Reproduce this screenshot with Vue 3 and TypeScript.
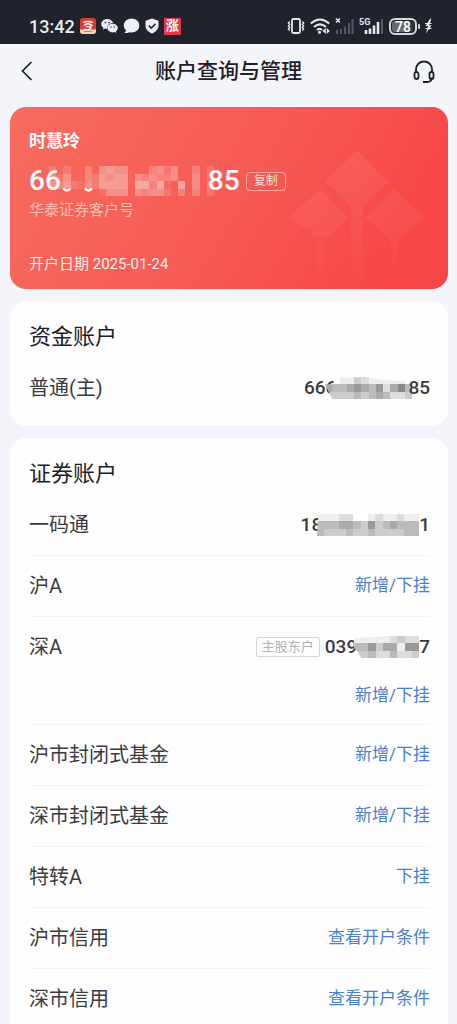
<script setup lang="ts">
interface Masked {
  head: string
  tail: string
  rows: string[]
  clip: string
  kind: string
}
interface Account {
  label: string
  value?: Masked
  tag?: string
  action?: string
}

// Each character is one cell: a hex grey level, or "." for an empty cell
const fundNumber: Masked = {
  head: '666',
  tail: '85',
  kind: 'fund',
  rows: ['..eecdeeeeef', 'abba9ab9da8b', 'ccccbcbabddc'],
  clip: '0,1 1.2,1 2,.1 5.5,0 8,.4 12,.6 12,3 1,3',
}

const accounts: Account[] = [
  {
    label: '一码通',
    value: {
      head: '18',
      tail: '1',
      kind: 'code',
      rows: ['eeeddffedeedee', 'bbbaabc9cbabbb', 'bcccbccbccccbb'],
      clip: '.2,0 14,0 14,3 0,3',
    },
  },
  { label: '沪A', action: '新增/下挂' },
  {
    label: '深A',
    tag: '主股东户',
    action: '新增/下挂',
    value: {
      head: '039',
      tail: '7',
      kind: 'holder',
      rows: ['eeeeedcdd', 'bb9caae99', 'ccbddbddc'],
      clip: '0,.3 5,0 9,0 9,3 1,3 .4,2 0,1.6',
    },
  },
  { label: '沪市封闭式基金', action: '新增/下挂' },
  { label: '深市封闭式基金', action: '新增/下挂' },
  { label: '特转A', action: '下挂' },
  { label: '沪市信用', action: '查看开户条件' },
  { label: '深市信用', action: '查看开户条件' },
]

// Customer number mask: each digit is an opacity step
const customerMask: string[] = [
  '2.2..3.4544...3424..3.2',
  '314..325455.434334..4.2',
  '43521425555.66361.6.4.3',
  '.......1444.43442.3.3.2',
]

const maskWidth = (rows: string[]): number => Math.round((rows[0].length * 29) / 4)

function cells(rows: string[]): { x: number; y: number; v: string }[] {
  return rows.flatMap((row, y) => [...row].map((v, x) => ({ x, y, v })).filter((c) => c.v !== '.'))
}
</script>

<template>
  <div class="screen">
    <div class="status">
      <div class="status-group left">
        <span class="time">13:42</span>
        <svg width="16" height="16" viewBox="0 0 16 16">
          <rect width="16" height="16" rx="3" fill="#dc3a32" />
          <path d="M0 11.500h16V13a3 3 0 0 1-3 3H3a3 3 0 0 1-3-3z" fill="#f3d3b4" />
          <path d="M3 4.500q5-2 10 0M4 7.500q4-3.500 8 0l-3 1.500M6 9q3-1 5 1-3 3-7 1" fill="none" stroke="#fff" stroke-width="1.300" />
          <path d="M4 13.500h8" stroke="#d08060" />
        </svg>
        <svg width="17" height="16" viewBox="0 0 17 16">
          <path d="M6.300 1C2.900 1 .3 3.200.3 6c0 1.600.8 2.900 2.100 3.800L2 11.800l2.200-1.200q1 .3 2 .3C6 7.200 8.500 5 12.200 5 11.600 2.700 9.200 1 6.300 1z" fill="#e8ecef" />
          <path d="M11.600 5.800c-3 0-5.200 1.900-5.200 4.300s2.300 4.300 5.200 4.300q.9 0 1.700-.3l1.900 1-.4-1.700c1.200-.8 2-2 2-3.300 0-2.400-2.300-4.300-5.200-4.300z" fill="#e8ecef" />
          <g fill="#20232b"><circle cx="4.300" cy="4.600" r=".8" /><circle cx="8" cy="4.600" r=".8" /><circle cx="10" cy="8.900" r=".7" /><circle cx="13.200" cy="8.900" r=".7" /></g>
        </svg>
        <svg width="17" height="16" viewBox="0 0 17 16">
          <path d="M8.600.5C4.200.5.8 3.600.8 7.400c0 2.200 1 3.900 2.500 5.100l-1.900 2.600c2 .1 3.700-.3 5-.9q1 .2 2.200.2c4.400 0 7.700-3.100 7.700-7S13 .5 8.600.5z" fill="#eef1f4" />
        </svg>
        <svg width="14" height="16" viewBox="0 0 14 16">
          <path d="M7 .5l6.500 2.300v5.200c0 3.700-3.200 6-6.500 7.500C3.700 14 .5 11.700.5 8V2.800z" fill="#eef1f4" />
          <path d="M3.800 7.600l2.500 2.500 4.200-4.300" fill="none" stroke="#20232b" stroke-width="1.500" />
        </svg>
        <span class="rise">涨</span>
      </div>
      <div class="status-group right">
        <svg width="18" height="18" viewBox="0 0 18 18" fill="none" stroke="#e6e8ec">
          <rect x="5" y="2" width="8" height="14" rx="1.500" stroke-width="1.800" />
          <path d="M2.800 4.500L1.300 6l1.500 1.500-1.500 1.500 1.500 1.500-1.500 1.500 1.500 1.500M15.200 4.500l1.500 1.500-1.500 1.500 1.500 1.500-1.500 1.500 1.500 1.500-1.500 1.500" stroke-width="1.300" />
        </svg>
        <svg width="20" height="18" viewBox="0 0 20 18" fill="none" stroke="#e6e8ec" stroke-width="2.100">
          <path d="M.8 6.500q9.200-8 18.400 0M4 10q6-5.400 12 0M7 13q3-2.600 5 0" />
          <circle cx="9.500" cy="15.300" r="1.500" fill="#e6e8ec" stroke="none" />
          <path d="M12.500 14l3.300-3v6zM16.800 11l3 3-3 3z" fill="#e6e8ec" stroke="none" />
        </svg>
        <svg width="19" height="18" viewBox="0 0 19 18">
          <path d="M1 1.500l4 4m0-4l-4 4" stroke="#e6e8ec" stroke-width="1.500" />
          <path d="M2 13v4M6 12v5M10 9.500V17M14 6v11M17.500 2v15" stroke="#555962" stroke-width="2" />
        </svg>
        <svg width="25" height="18" viewBox="0 0 25 18">
          <text x="0" y="8" font-family="Roboto, sans-serif" font-size="9" font-weight="700" fill="#e6e8ec">5G</text>
          <path d="M7 13v4M11 11.500V17M15 8.500V17M19 5v12" stroke="#e6e8ec" stroke-width="2.600" />
          <path d="M23 2v15" stroke="#555962" stroke-width="2" />
        </svg>
        <div class="power">
          <span class="battery"><span class="level">78</span></span>
          <span class="nub"></span>
        </div>
        <svg width="7" height="18" viewBox="0 0 7 18">
          <path d="M5.500 1L.5 9h2.500L1 16.500 6.500 8.300H4.300L6 3z" fill="#e6e8ec" />
          <path d="M0 6.500h6.500M.5 11.500H6.500" stroke="#e6e8ec" stroke-width="1.200" />
        </svg>
      </div>
    </div>

    <header class="bar">
      <button class="icon-btn" aria-label="返回">
        <svg width="24" height="24" viewBox="0 0 24 24" fill="none" stroke="#1d2027" stroke-width="1.700">
          <path d="M14.500 3L5.500 12l9 9" />
        </svg>
      </button>
      <h1>账户查询与管理</h1>
      <button class="icon-btn" aria-label="客服">
        <svg width="24" height="24" viewBox="0 0 24 24" fill="none" stroke="#1d2027" stroke-width="1.800">
          <path d="M4 13V10.500C4 5.800 7.500 2.500 12 2.500s8 3.300 8 8V13M20 18.500c-.2 3-2 4.500-5 4.500h-4" />
          <rect x="2.500" y="13" width="4" height="7" rx="2" />
          <rect x="17.500" y="13" width="4" height="7" rx="2" />
        </svg>
      </button>
    </header>

    <main class="content">
      <section class="customer">
        <svg class="emblem" width="140" height="140" viewBox="0 0 140 140" aria-hidden="true">
          <defs>
            <linearGradient id="emblemFade" x1="0" y1="0" x2="0" y2="140" gradientUnits="userSpaceOnUse">
              <stop offset="0" stop-color="#ffe0e8" stop-opacity=".08" />
              <stop offset=".6" stop-color="#ffe0e8" stop-opacity=".05" />
              <stop offset="1" stop-color="#ffe0e8" stop-opacity="0" />
            </linearGradient>
          </defs>
          <path
            d="M70 3L102 35Q84 48 76 62V133H64V62Q56 48 38 35zM33 42L62 71Q48 82 37 94V125H30V94Q20 82 2 71zM107 42L138 71Q120 82 111 94V125H104V94Q92 82 78 71z"
            fill="url(#emblemFade)"
          />
        </svg>
        <p class="name">时慧玲</p>
        <div class="number-line">
          <span class="number">66</span>
          <svg class="customer-mask" width="165" height="30" viewBox="0 0 23 4" preserveAspectRatio="none" aria-hidden="true">
            <path d="M2 3q.5.550 1 0M5 3q.5.550 1 0" fill="none" stroke="#fff" stroke-width=".3" />
            <rect
              v-for="c in cells(customerMask)"
              :key="`${c.x}-${c.y}`"
              :x="c.x"
              :y="c.y"
              width="1"
              height="1"
              fill="#f3d5d0"
              :fill-opacity="Number(c.v) * 0.1"
              shape-rendering="crispEdges"
            />
          </svg>
          <span class="number">85</span>
          <button class="copy">复制</button>
        </div>
        <p class="caption">华泰证券客户号</p>
        <p class="opened">开户日期 2025-01-24</p>
      </section>

      <section class="card">
        <h2>资金账户</h2>
        <div class="row">
          <div class="line">
            <span class="label">普通(主)</span>
            <span class="value">
              <span>{{ fundNumber.head }}</span>
              <svg :class="['mask', fundNumber.kind]" :width="maskWidth(fundNumber.rows)" height="22" :viewBox="`0 0 ${fundNumber.rows[0].length} 3`" preserveAspectRatio="none" aria-hidden="true">
                <clipPath id="clip-fund"><polygon :points="fundNumber.clip" /></clipPath>
                <g clip-path="url(#clip-fund)" shape-rendering="crispEdges">
                  <rect v-for="c in cells(fundNumber.rows)" :key="`${c.x}-${c.y}`" :x="c.x" :y="c.y" width="1" height="1" :fill="`#${c.v.repeat(3)}`" />
                </g>
              </svg>
              <span>{{ fundNumber.tail }}</span>
            </span>
          </div>
        </div>
      </section>

      <section class="card">
        <h2>证券账户</h2>
        <div v-for="a in accounts" :key="a.label" class="row">
          <div class="line">
            <span class="label">{{ a.label }}</span>
            <span v-if="a.value" class="value">
              <span v-if="a.tag" class="tag">{{ a.tag }}</span>
              <span>{{ a.value.head }}</span>
              <svg :class="['mask', a.value.kind]" :width="maskWidth(a.value.rows)" height="22" :viewBox="`0 0 ${a.value.rows[0].length} 3`" preserveAspectRatio="none" aria-hidden="true">
                <clipPath :id="`clip-${a.value.kind}`"><polygon :points="a.value.clip" /></clipPath>
                <g :clip-path="`url(#clip-${a.value.kind})`" shape-rendering="crispEdges">
                  <rect v-for="c in cells(a.value.rows)" :key="`${c.x}-${c.y}`" :x="c.x" :y="c.y" width="1" height="1" :fill="`#${c.v.repeat(3)}`" />
                </g>
              </svg>
              <span>{{ a.value.tail }}</span>
            </span>
            <button v-else class="action">{{ a.action }}</button>
          </div>
          <div v-if="a.value && a.action" class="extra">
            <button class="action">{{ a.action }}</button>
          </div>
        </div>
      </section>
    </main>
  </div>
</template>

<style>
body {
  margin: 0;
  background: #f4f5fa;
}
</style>

<style scoped>
.screen {
  display: flex;
  flex-direction: column;
  height: 100vh;
  overflow: hidden;
  background: #f4f5fa;
  color: #222429;
  font-family: Roboto, "Noto Sans CJK SC", sans-serif;
}
h1,
h2,
p {
  margin: 0;
}
button {
  padding: 0;
  border: 0;
  background: none;
  font-family: inherit;
  cursor: pointer;
}
svg {
  display: block;
  flex: none;
}
.status {
  flex: none;
  display: flex;
  justify-content: space-between;
  height: 44px;
  box-sizing: border-box;
  padding: 8px 25px 0 29px;
  background: #20232b;
}
.status-group {
  display: flex;
  align-items: center;
  gap: 5px;
}
.time {
  font-size: 18px;
  font-weight: 500;
  color: #e9ebee;
}
.rise {
  width: 17px;
  height: 17px;
  background: #e23a4c;
  color: #fff;
  font-size: 13px;
  font-weight: 700;
  line-height: 16px;
  text-align: center;
}
.power {
  display: flex;
  align-items: center;
  gap: 1px;
}
.battery {
  display: flex;
  box-sizing: border-box;
  width: 28px;
  height: 17px;
  padding: 1px;
  border: 2px solid #d5d8dc;
  border-radius: 6px;
}
.level {
  flex: 1;
  border-radius: 3px;
  background: linear-gradient(90deg, #666a72 78%, #30333b 78%);
  color: #fff;
  font-size: 14px;
  font-weight: 500;
  line-height: 12px;
  text-align: center;
}
.nub {
  width: 2px;
  height: 5px;
  border-radius: 1px;
  background: #d5d8dc;
}
.bar {
  flex: none;
  display: flex;
  align-items: center;
  justify-content: space-between;
  height: 54px;
  padding: 0 17px;
}
.icon-btn {
  width: 28px;
  height: 24px;
  flex: none;
}
h1 {
  font-size: 21px;
  font-weight: 500;
  line-height: 32px;
  color: #1d2027;
}
.content {
  flex: 1;
  min-height: 0;
  overflow-y: auto;
  scrollbar-width: none;
  display: flex;
  flex-direction: column;
  gap: 12px;
  padding: 9px 9px 0 10px;
}
.customer {
  flex: none;
  position: relative;
  overflow: hidden;
  box-sizing: border-box;
  height: 182px;
  padding: 22px 19px 0;
  border-radius: 16px;
  background: linear-gradient(120deg, #f76c5e 0%, #f65b55 50%, #f74648 88%);
  color: #fff;
}
.emblem {
  position: absolute;
  right: 21px;
  bottom: 2px;
}
.name {
  font-size: 17px;
  font-weight: 700;
  line-height: 24px;
}
.number-line {
  display: flex;
  align-items: center;
  height: 32px;
  margin-top: 12px;
}
.number {
  font-size: 28px;
  font-weight: 500;
  line-height: 32px;
}
.customer-mask {
  margin: 0 -6px 0 -12px;
  z-index: 1;
}
.copy {
  width: 40px;
  height: 19px;
  margin-left: 6px;
  border: 1px solid rgba(255, 225, 215, 0.6);
  border-radius: 4px;
  color: #fde4de;
  font-size: 12px;
  line-height: 17px;
}
.caption {
  margin-top: 2px;
  font-size: 15px;
  line-height: 22px;
  color: #fbbdb3;
}
.opened {
  margin-top: 32px;
  font-size: 15px;
  line-height: 22px;
  color: #fff0ec;
}
.card {
  flex: none;
  padding: 14px 18px 8px 19px;
  border-radius: 16px;
  background: #fefefe;
}
h2 {
  font-size: 22px;
  font-weight: 400;
  line-height: 43px;
  color: #1d2027;
}
.row + .row {
  border-top: 1px solid #f3f3f5;
}
.line {
  display: flex;
  align-items: center;
  justify-content: space-between;
  height: 60px;
}
.label {
  font-size: 20px;
  line-height: 30px;
  color: #3a3c41;
}
.value {
  display: flex;
  align-items: center;
  font-size: 19px;
  font-weight: 500;
  line-height: 24px;
  color: #3a3c41;
}
.mask.fund {
  margin: 0 -4px 0 -11px;
}
.mask.code {
  margin-left: -5px;
}
.mask.holder {
  margin-left: -3px;
}
.tag {
  margin-right: 5px;
  padding: 0 5px;
  border: 1px solid #d6d7d9;
  border-radius: 2px;
  color: #b2b3b6;
  font-size: 13px;
  font-weight: 400;
  line-height: 18px;
}
.action {
  padding-bottom: 2px;
  color: #4b7fd0;
  font-size: 17px;
  line-height: 24px;
}
.extra {
  display: flex;
  justify-content: flex-end;
  padding: 6px 0 15px;
}
</style>
